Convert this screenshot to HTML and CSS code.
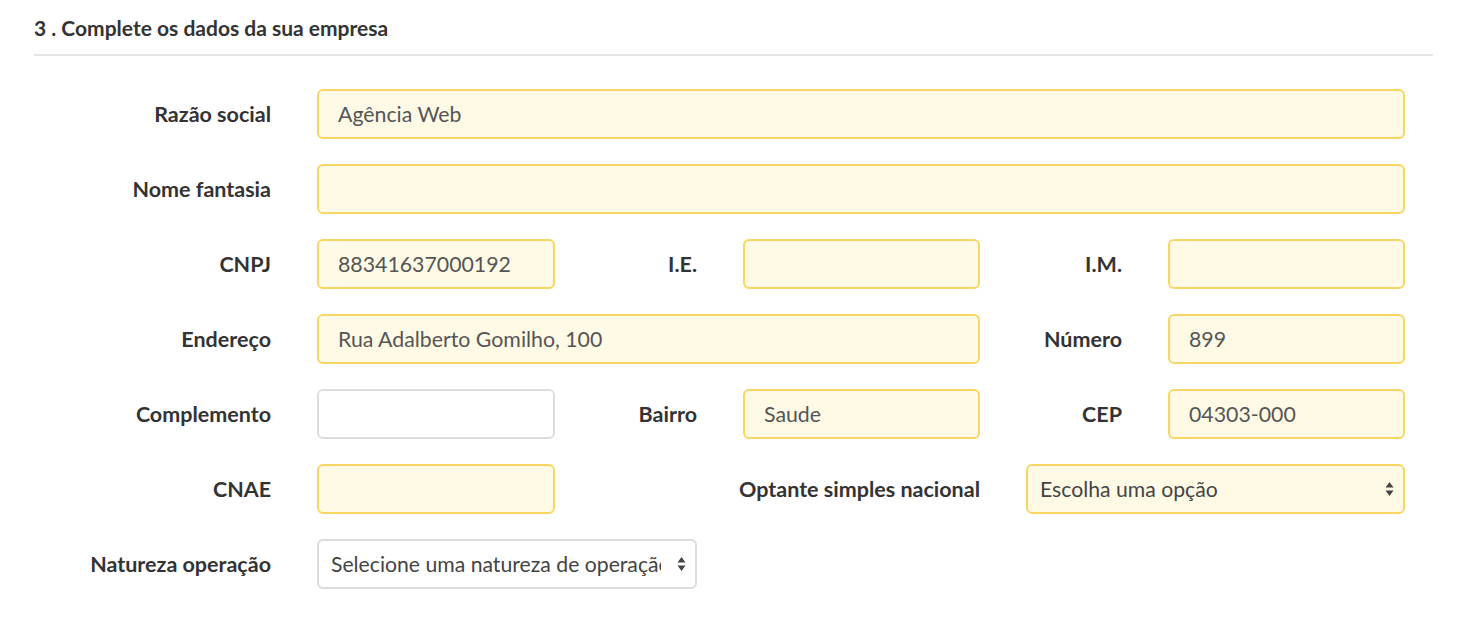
FILE: index.html
```html
<!DOCTYPE html>
<html lang="pt-BR">
<head>
<meta charset="utf-8">
<title>Complete os dados da sua empresa</title>
<link rel="stylesheet" href="styles.css">
</head>
<body>
<div class="page">
  <h3 class="section-title">3 . Complete os dados da sua empresa</h3>
  <form class="form-grid">
    <label class="lbl">Razão social</label>
    <input class="field warn span-5" type="text" value="Agência Web">

    <label class="lbl">Nome fantasia</label>
    <input class="field warn span-5" type="text" value="">

    <label class="lbl">CNPJ</label>
    <input class="field warn" type="text" value="88341637000192">
    <label class="lbl">I.E.</label>
    <input class="field warn" type="text" value="">
    <label class="lbl">I.M.</label>
    <input class="field warn" type="text" value="">

    <label class="lbl">Endereço</label>
    <input class="field warn span-3" type="text" value="Rua Adalberto Gomilho, 100">
    <label class="lbl">Número</label>
    <input class="field warn" type="text" value="899">

    <label class="lbl">Complemento</label>
    <input class="field" type="text" value="">
    <label class="lbl">Bairro</label>
    <input class="field warn" type="text" value="Saude">
    <label class="lbl">CEP</label>
    <input class="field warn" type="text" value="04303-000">

    <label class="lbl">CNAE</label>
    <input class="field warn" type="text" value="">
    <label class="lbl span-2">Optante simples nacional</label>
    <div class="select-wrap span-2">
      <select class="sel sel-warn"><option>Escolha uma opção</option></select>
      <svg class="arrows" width="9" height="16" viewBox="0 0 9 16"><path d="M4.5 1 L8.5 6.5 H0.5 Z M4.5 15 L8.5 9.5 H0.5 Z" fill="#444"/></svg>
    </div>

    <label class="lbl">Natureza operação</label>
    <div class="select-wrap span-2">
      <select class="sel sel-plain"><option>Selecione uma natureza de operação</option></select>
      <svg class="arrows" width="9" height="16" viewBox="0 0 9 16"><path d="M4.5 1 L8.5 6.5 H0.5 Z M4.5 15 L8.5 9.5 H0.5 Z" fill="#444"/></svg>
    </div>
  </form>
</div>
</body>
</html>
```
FILE: styles.css
```css
html, body {
  margin: 0;
  padding: 0;
  background: #ffffff;
}
body {
  font-family: Lato, "Open Sans", Arial, sans-serif;
  color: #333333;
}
.page {
  padding: 16px 33px 0 34px;
}
.section-title {
  margin: 0;
  font-size: 21px;
  line-height: 24px;
  font-weight: 700;
  color: #333333;
  padding-bottom: 14px;
  border-bottom: 2px solid #e3e5e8;
}
.form-grid {
  margin-top: 33px;
  display: grid;
  grid-template-columns: 237px 238px 96px 237px 96px 237px;
  grid-auto-rows: 50px;
  column-gap: 46px;
  row-gap: 25px;
}
.lbl {
  display: flex;
  align-items: center;
  justify-content: flex-end;
  font-size: 21.5px;
  font-weight: 700;
  color: #333333;
  white-space: nowrap;
}
.span-2 { grid-column: span 2; }
.span-3 { grid-column: span 3; }
.span-5 { grid-column: span 5; }
.field {
  box-sizing: border-box;
  width: 100%;
  height: 50px;
  margin: 0;
  border: 2px solid #dcdcdc;
  border-radius: 6px;
  background: #ffffff;
  padding: 0 19px;
  font-family: Lato, "Open Sans", Arial, sans-serif;
  font-size: 21.3px;
  color: #555555;
  outline: none;
}
.field.warn {
  border-color: #f8d664;
  background: #fffae6;
}
.select-wrap {
  position: relative;
  height: 50px;
}
.sel {
  -webkit-appearance: none;
  appearance: none;
  box-sizing: border-box;
  width: 100%;
  height: 50px;
  margin: 0;
  border: 2px solid #dcdcdc;
  border-radius: 6px;
  background: #ffffff;
  font-family: Lato, "Open Sans", Arial, sans-serif;
  font-size: 21.2px;
  color: #444444;
  outline: none;
}
.sel-warn {
  border-color: #f8d664;
  background: #fffae6;
  padding: 0 36px 0 12px;
}
.sel-plain {
  padding: 0 34px 0 12px;
}
.arrows {
  position: absolute;
  right: 11px;
  top: 17px;
  pointer-events: none;
}
```
